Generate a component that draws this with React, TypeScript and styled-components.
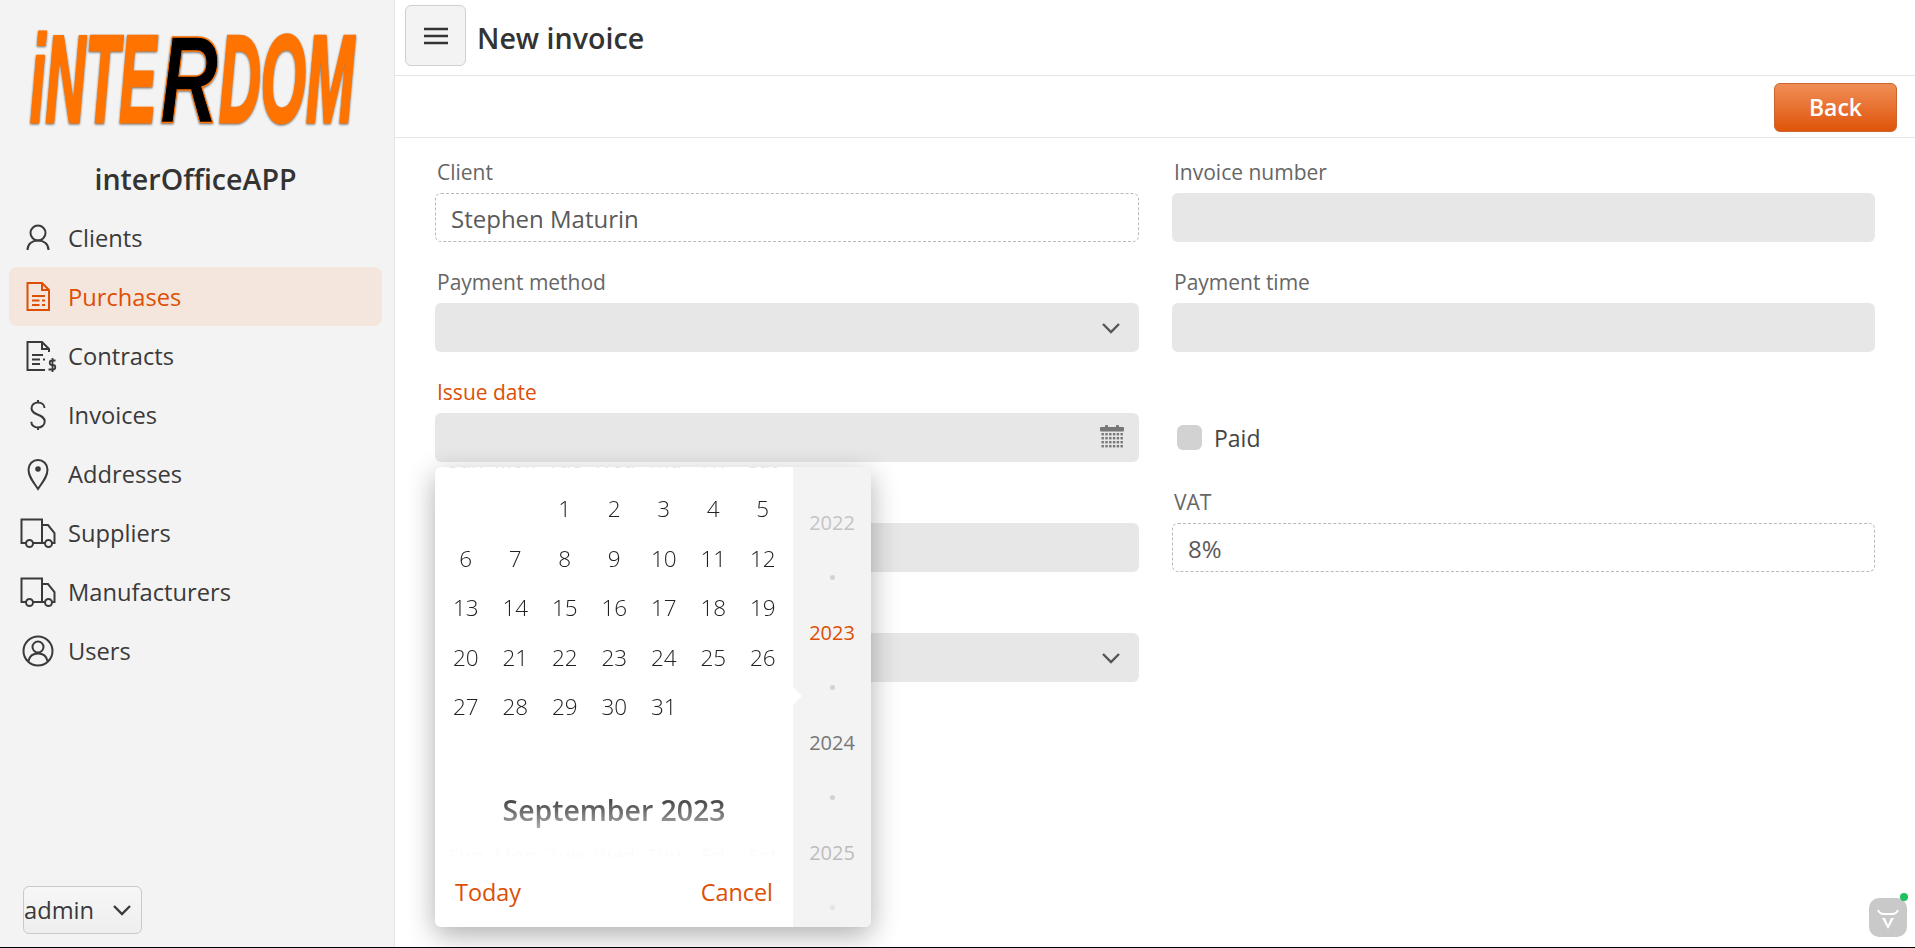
import React from 'react';
import styled, { createGlobalStyle } from 'styled-components';

const ORANGE = '#dc4f05';
const FONT = '"Open Sans", "Noto Sans", sans-serif';

const GlobalStyle = createGlobalStyle`
  html, body {
    margin: 0;
    padding: 0;
    background: #fff;
    font-family: ${FONT};
    overflow: hidden;
  }
  * { box-sizing: border-box; }
`;

const Page = styled.div`
  display: flex;
  height: 948px;
  border-bottom: 1px solid #000;
`;

const Sidebar = styled.aside`
  width: 395px;
  flex: none;
  display: flex;
  flex-direction: column;
  background: #f3f3f3;
  border-right: 1px solid #e4e4e4;
  padding: 0 12px 13px 9px;
`;

const LogoBox = styled.div`
  height: 156px;
  padding: 30px 0 0 17px;
`;

const AppName = styled.h1`
  margin: 0 0 6px;
  height: 46px;
  line-height: 46px;
  text-align: center;
  font-size: 28.6px;
  font-weight: 600;
  color: #333;
`;

const Nav = styled.nav`
  display: flex;
  flex-direction: column;
  gap: 0;
`;

const NavItem = styled.a<{ $active?: boolean }>`
  display: flex;
  align-items: center;
  gap: 12px;
  height: 59px;
  padding-left: 11px;
  border-radius: 8px;
  font-size: 23.7px;
  color: ${p => (p.$active ? ORANGE : '#3a3a3a')};
  background: ${p => (p.$active ? '#f4e6dd' : 'transparent')};
  font-weight: ${p => (p.$active ? 500 : 400)};
`;

const NavIcon = styled.svg`
  width: 36px;
  height: 36px;
  flex: none;
  fill: none;
  stroke: currentColor;
  stroke-width: 2;
  overflow: visible;
`;

const UserSelect = styled.div`
  margin: auto 0 0 14px;
  width: 119px;
  height: 48px;
  display: flex;
  align-items: center;
  justify-content: space-between;
  border: 1px solid #c9c9c9;
  border-radius: 6px;
  background: linear-gradient(#f7f7f7, #eeeeee);
  font-size: 23.7px;
  color: #3a3a3a;
  padding-right: 9px;
  svg { width: 20px; height: 12px; }
`;

const Main = styled.main`
  flex: 1;
  min-width: 0;
  display: flex;
  flex-direction: column;
  position: relative;
`;

const Header = styled.header`
  height: 76px;
  flex: none;
  display: flex;
  align-items: center;
  gap: 11px;
  padding: 0 0 0 10px;
  border-bottom: 1px solid #e6e6e6;
`;

const MenuButton = styled.button`
  width: 61px;
  height: 61px;
  margin-top: -4px;
  display: flex;
  align-items: center;
  justify-content: center;
  background: #f3f3f3;
  border: 1px solid #cfcfcf;
  border-radius: 6px;
  padding: 0;
  svg { width: 24px; height: 20px; }
`;

const Title = styled.div`
  font-size: 28.6px;
  font-weight: 600;
  color: #333;
  margin-top: -1px;
`;

const Toolbar = styled.div`
  height: 62px;
  flex: none;
  display: flex;
  justify-content: flex-end;
  align-items: center;
  padding: 0 18px 0 0;
  border-bottom: 1px solid #e6e6e6;
`;

const BackButton = styled.button`
  width: 123px;
  height: 49px;
  margin-top: 1px;
  border: 1px solid #c9662f;
  border-radius: 6px;
  background: linear-gradient(#f08e57, #df5409);
  color: #fff;
  font-family: ${FONT};
  font-size: 23px;
  font-weight: 600;
  padding: 0;
`;

const FormGrid = styled.form`
  display: grid;
  grid-template-columns: 704px 703px;
  column-gap: 33px;
  grid-auto-rows: 110px;
  padding: 19px 0 0 40px;
`;

const Field = styled.div`
  position: relative;
  min-width: 0;
`;

const Label = styled.label<{ $active?: boolean }>`
  display: block;
  height: 36px;
  line-height: 30px;
  padding-left: 2px;
  font-size: 21px;
  color: ${p => (p.$active ? ORANGE : '#666')};
  font-weight: ${p => (p.$active ? 500 : 400)};
`;

const TextInput = styled.input`
  display: block;
  width: 100%;
  height: 49px;
  border: 1px dashed #b9b9b9;
  border-radius: 6px;
  background: #fff;
  padding: 2px 15px 0;
  font-family: ${FONT};
  font-size: 24px;
  color: #5a5a5a;
  outline: none;
`;

const Disabled = styled.div`
  height: 49px;
  display: flex;
  align-items: center;
  justify-content: flex-end;
  padding-right: 16px;
  border-radius: 6px;
  background: #e7e7e7;
  color: #6a6a6a;
`;

const Chevron = styled.svg`
  width: 20px;
  height: 12px;
  margin-right: 2px;
  fill: none;
  stroke: #555;
  stroke-width: 2.4;
`;

const CalendarGlyph = styled.svg`
  width: 24px;
  height: 25px;
  margin-right: -1px;
  fill: #777;
`;

const PaidRow = styled.div`
  height: 49px;
  margin-top: 36px;
  display: flex;
  align-items: center;
  gap: 12px;
  padding-left: 5px;
  font-size: 23px;
  font-weight: 400;
  color: #444;
`;

const CheckBox = styled.span`
  width: 25px;
  height: 25px;
  border-radius: 6px;
  background: #d2d2d2;
`;

const Popup = styled.div`
  position: absolute;
  z-index: 5;
  top: 90px;
  left: 0;
  width: 436px;
  height: 460px;
  display: flex;
  border-radius: 6px;
  overflow: hidden;
  background: #fff;
  box-shadow: 0 8px 28px rgba(0, 0, 0, 0.32);
`;

const CalendarPane = styled.div`
  width: 358px;
  flex: none;
  display: flex;
  flex-direction: column;
`;

const MonthScroller = styled.div`
  height: 390px;
  flex: none;
  overflow: hidden;
  padding: 0 6px;
  mask-image: linear-gradient(to bottom, rgba(0, 0, 0, 0.2) 0, #000 18px, #000 335px, rgba(0, 0, 0, 0.03) 382px);
`;

const WeekRow = styled.div<{ $top?: boolean }>`
  display: grid;
  grid-template-columns: repeat(7, 49.5px);
  height: 24px;
  line-height: 24px;
  margin: ${p => (p.$top ? '-18px 0 11px' : '5px 0 0')};
  text-align: center;
  font-size: 20px;
  color: #888;
`;

const DayGrid = styled.div`
  display: grid;
  grid-template-columns: repeat(7, 49.5px);
  grid-auto-rows: 49.5px;
  height: 297px;
`;

const Day = styled.span`
  display: flex;
  align-items: center;
  justify-content: center;
  font-size: 22.5px;
  font-weight: 300;
  color: #222;
`;

const MonthTitle = styled.div`
  height: 58px;
  display: flex;
  align-items: center;
  justify-content: center;
  font-size: 28.4px;
  font-weight: 600;
  color: #4c4c4c;
`;

const PopupFooter = styled.div`
  flex: 1;
  display: flex;
  justify-content: space-between;
  align-items: center;
  padding: 0 20px 0 20px;
  font-size: 23.4px;
  font-weight: 500;
  color: ${ORANGE};
`;

const YearStrip = styled.div`
  position: relative;
  flex: 1;
  background: #f3f3f3;
  padding-top: 27.5px;
  overflow: hidden;
`;

const YearItem = styled.div<{ $color: string }>`
  height: 55px;
  display: flex;
  align-items: center;
  justify-content: center;
  font-size: 20px;
  color: ${p => p.$color};
`;

const YearDot = styled.div<{ $color?: string }>`
  height: 55px;
  display: flex;
  align-items: center;
  justify-content: center;
  &::before {
    content: '';
    width: 5px;
    height: 5px;
    border-radius: 50%;
    background: ${p => p.$color || '#d2d2d2'};
  }
`;

const Pointer = styled.span`
  position: absolute;
  left: 0;
  top: 220px;
  width: 0;
  height: 0;
  border-style: solid;
  border-width: 9px 0 9px 9px;
  border-color: transparent transparent transparent #fff;
`;

const StatusWidget = styled.div`
  position: absolute;
  right: 8px;
  bottom: 10px;
  width: 38px;
  height: 39px;
  border-radius: 10px;
  background: #c9c9c9;
  display: flex;
  align-items: center;
  justify-content: center;
  svg { width: 22px; height: 24px; }
  &::after {
    content: '';
    position: absolute;
    top: -5px;
    right: -1px;
    width: 8px;
    height: 8px;
    border-radius: 50%;
    background: #1fc05f;
  }
`;

const LogoSvg = styled.svg`
  display: block;
  overflow: visible;
  filter: drop-shadow(0 1.5px 0.8px rgba(0, 0, 0, 0.55));
`;

const LogoText = styled.text<{ $dark?: boolean }>`
  font-family: "Liberation Sans", sans-serif;
  font-weight: 700;
  font-style: italic;
  font-size: 126px;
  fill: ${p => (p.$dark ? '#000' : '#ff7300')};
  stroke: #ff7300;
  stroke-width: ${p => (p.$dark ? 1.5 : 3)}px;
`;

const truck = (
  <>
    <path d="M6 28H1.500V4.500H22V28h-9" />
    <path d="M22 10h6l6.500 8v10h-2.500M22 28h3" />
    <circle cx="9.500" cy="28.500" r="3.500" />
    <circle cx="28.500" cy="28.500" r="3.500" />
  </>
);

const navItems = [
  { label: 'Clients', icon: <><circle cx="18" cy="13" r="7.5" /><path d="M7.5 30c0-6 4.5-9.500 10.500-9.500S28.500 24 28.500 30" /></> },
  {
    label: 'Purchases',
    active: true,
    icon: <><path d="M7.500 4H22l7 7v20H7.500z" /><path d="M22 4v7h7M12 17h13M12 21.500h7.500M22 21.500h3M12 26h7.500M22 26h3" /></>,
  },
  {
    label: 'Contracts',
    icon: <><path d="M29 14v-3l-7-7H7.500v28H25" /><path d="M22 4v7h7M12 17h11M12 21.500h8M23 21.500h2M12 26h8" /><path d="M35.500 22.500h-3.500a2.200 2.200 0 0 0 0 4.500h1a2.200 2.200 0 0 1 0 4.500H28.500M32.500 20v14" strokeWidth="1.800" /></>,
  },
  { label: 'Invoices', icon: <path d="M24.500 11c0-3.500-3-5.500-6.500-5.500s-6.500 2.300-6.500 5.800c0 7.700 13.200 5.200 13.200 13.200 0 3.700-3.200 6-6.700 6s-6.700-2.200-6.700-5.800M18 3v2.500M18 30.500V33" /> },
  { label: 'Addresses', icon: <><path d="M18 33C13 25.500 8.500 20.500 8.500 13.500a9.500 9.500 0 0 1 19 0C27.500 20.500 23 25.500 18 33z" /><circle cx="18" cy="13" r="1.800" fill="currentColor" /></> },
  { label: 'Suppliers', icon: truck },
  { label: 'Manufacturers', icon: truck },
  { label: 'Users', icon: <><circle cx="18" cy="18" r="14.500" /><circle cx="18" cy="14" r="5.500" /><path d="M8.500 28c1-5 5-7.500 9.500-7.500s8.500 2.500 9.500 7.500" /></> },
];

const weekDays = ['Sun', 'Mon', 'Tue', 'Wed', 'Thu', 'Fri', 'Sat'];
const blanks = [0, 0];
const days = Array.from({ length: 31 }, (_, i) => i + 1);

function Logo() {
  return (
    <LogoSvg width="330" height="100" viewBox="0 0 330 100">
      <LogoText transform="translate(4 92) scale(0.44 0.98)">iNTE</LogoText>
      <LogoText $dark transform="translate(134 92) scale(0.64 0.98)">R</LogoText>
      <LogoText transform="translate(193 92) scale(0.46 0.98)">DOM</LogoText>
    </LogoSvg>
  );
}

function ChevronIcon() {
  return (
    <Chevron viewBox="0 0 20 12">
      <path d="M2 2l8 8 8-8" />
    </Chevron>
  );
}

function CalendarIcon() {
  const dots = [];
  for (let r = 0; r < 4; r++) {
    for (let c = 0; c < 6; c++) {
      dots.push(<rect key={`${r}-${c}`} x={1.5 + c * 3.8} y={8 + r * 4} width="2.400" height="2.400" />);
    }
  }
  return (
    <CalendarGlyph viewBox="0 0 24 25">
      <rect x="0" y="2" width="24" height="4.500" rx="1" />
      <rect x="5" y="0" width="3" height="3" rx="1" />
      <rect x="16" y="0" width="3" height="3" rx="1" />
      {dots}
    </CalendarGlyph>
  );
}

export default function App() {
  return (
    <Page>
      <GlobalStyle />
      <Sidebar>
        <LogoBox>
          <Logo />
        </LogoBox>
        <AppName>interOfficeAPP</AppName>
        <Nav>
          {navItems.map(item => (
            <NavItem key={item.label} $active={item.active}>
              <NavIcon viewBox="0 0 36 36">{item.icon}</NavIcon>
              {item.label}
            </NavItem>
          ))}
        </Nav>
        <UserSelect>
          admin
          <svg viewBox="0 0 20 12" fill="none" stroke="#3a3a3a" strokeWidth="2.400">
            <path d="M2 2l8 8 8-8" />
          </svg>
        </UserSelect>
      </Sidebar>

      <Main>
        <Header>
          <MenuButton type="button">
            <svg viewBox="0 0 24 20" fill="none" stroke="#333" strokeWidth="2.400">
              <path d="M0 3h24M0 10h24M0 17h24" />
            </svg>
          </MenuButton>
          <Title>New invoice</Title>
        </Header>
        <Toolbar>
          <BackButton type="button">Back</BackButton>
        </Toolbar>

        <FormGrid>
          <Field>
            <Label>Client</Label>
            <TextInput readOnly value="Stephen Maturin" />
          </Field>
          <Field>
            <Label>Invoice number</Label>
            <Disabled />
          </Field>
          <Field>
            <Label>Payment method</Label>
            <Disabled>
              <ChevronIcon />
            </Disabled>
          </Field>
          <Field>
            <Label>Payment time</Label>
            <Disabled />
          </Field>
          <Field>
            <Label $active>Issue date</Label>
            <Disabled>
              <CalendarIcon />
            </Disabled>
            <Popup>
              <CalendarPane>
                <MonthScroller>
                  <WeekRow $top>
                    {weekDays.map(d => <span key={d}>{d}</span>)}
                  </WeekRow>
                  <DayGrid>
                    {blanks.map((_, i) => <Day key={`blank-${i}`} />)}
                    {days.map(d => <Day key={d}>{d}</Day>)}
                  </DayGrid>
                  <MonthTitle>September 2023</MonthTitle>
                  <WeekRow>
                    {weekDays.map(d => <span key={d}>{d}</span>)}
                  </WeekRow>
                </MonthScroller>
                <PopupFooter>
                  <span>Today</span>
                  <span>Cancel</span>
                </PopupFooter>
              </CalendarPane>
              <YearStrip>
                <Pointer />
                <YearItem $color="#c4c4c4">2022</YearItem>
                <YearDot />
                <YearItem $color={ORANGE}>2023</YearItem>
                <YearDot />
                <YearItem $color="#777">2024</YearItem>
                <YearDot />
                <YearItem $color="#bdbdbd">2025</YearItem>
                <YearDot $color="#e4e4e4" />
              </YearStrip>
            </Popup>
          </Field>
          <Field>
            <PaidRow>
              <CheckBox />
              Paid
            </PaidRow>
          </Field>
          <Field>
            <Label />
            <Disabled />
          </Field>
          <Field>
            <Label>VAT</Label>
            <TextInput readOnly value="8%" />
          </Field>
          <Field>
            <Label />
            <Disabled>
              <ChevronIcon />
            </Disabled>
          </Field>
        </FormGrid>

        <StatusWidget>
          <svg viewBox="0 0 22 24" fill="none" stroke="#fff" strokeWidth="2">
            <path d="M1 4c1 3 3 4 6 4h8c3 0 5-1 6-4" />
            <path d="M5 12h3l3 7 3-7h3l-6 11z" fill="#fff" stroke="none" />
          </svg>
        </StatusWidget>
      </Main>
    </Page>
  );
}
